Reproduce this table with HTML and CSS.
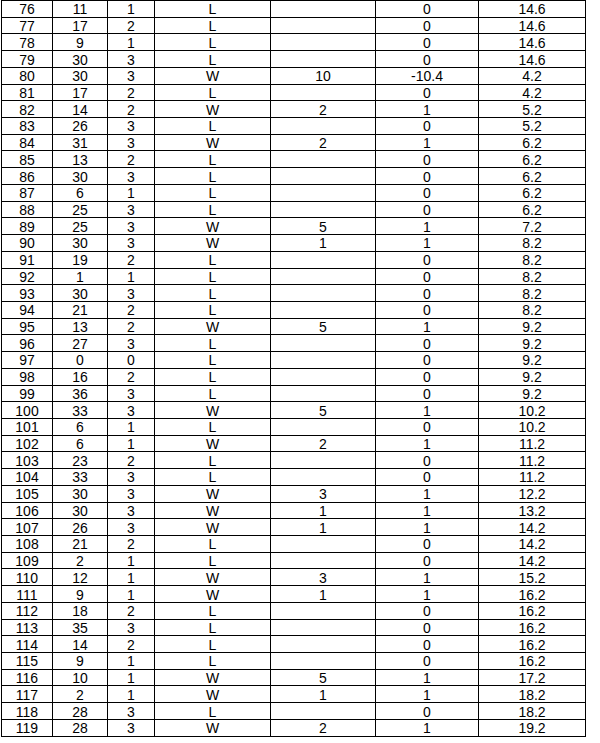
FILE: index.html
```html
<!DOCTYPE html>
<html>
<head>
<meta charset="utf-8">
<link rel="stylesheet" href="styles.css">
</head>
<body>
<table class="grid">
<colgroup>
<col class="c1"><col class="c2"><col class="c3"><col class="c4"><col class="c5"><col class="c6"><col class="c7">
</colgroup>
<tbody>
<tr><td>76</td><td>11</td><td>1</td><td>L</td><td></td><td>0</td><td>14.6</td></tr>
<tr><td>77</td><td>17</td><td>2</td><td>L</td><td></td><td>0</td><td>14.6</td></tr>
<tr><td>78</td><td>9</td><td>1</td><td>L</td><td></td><td>0</td><td>14.6</td></tr>
<tr><td>79</td><td>30</td><td>3</td><td>L</td><td></td><td>0</td><td>14.6</td></tr>
<tr><td>80</td><td>30</td><td>3</td><td>W</td><td>10</td><td>-10.4</td><td>4.2</td></tr>
<tr><td>81</td><td>17</td><td>2</td><td>L</td><td></td><td>0</td><td>4.2</td></tr>
<tr><td>82</td><td>14</td><td>2</td><td>W</td><td>2</td><td>1</td><td>5.2</td></tr>
<tr><td>83</td><td>26</td><td>3</td><td>L</td><td></td><td>0</td><td>5.2</td></tr>
<tr><td>84</td><td>31</td><td>3</td><td>W</td><td>2</td><td>1</td><td>6.2</td></tr>
<tr><td>85</td><td>13</td><td>2</td><td>L</td><td></td><td>0</td><td>6.2</td></tr>
<tr><td>86</td><td>30</td><td>3</td><td>L</td><td></td><td>0</td><td>6.2</td></tr>
<tr><td>87</td><td>6</td><td>1</td><td>L</td><td></td><td>0</td><td>6.2</td></tr>
<tr><td>88</td><td>25</td><td>3</td><td>L</td><td></td><td>0</td><td>6.2</td></tr>
<tr><td>89</td><td>25</td><td>3</td><td>W</td><td>5</td><td>1</td><td>7.2</td></tr>
<tr><td>90</td><td>30</td><td>3</td><td>W</td><td>1</td><td>1</td><td>8.2</td></tr>
<tr><td>91</td><td>19</td><td>2</td><td>L</td><td></td><td>0</td><td>8.2</td></tr>
<tr><td>92</td><td>1</td><td>1</td><td>L</td><td></td><td>0</td><td>8.2</td></tr>
<tr><td>93</td><td>30</td><td>3</td><td>L</td><td></td><td>0</td><td>8.2</td></tr>
<tr><td>94</td><td>21</td><td>2</td><td>L</td><td></td><td>0</td><td>8.2</td></tr>
<tr><td>95</td><td>13</td><td>2</td><td>W</td><td>5</td><td>1</td><td>9.2</td></tr>
<tr><td>96</td><td>27</td><td>3</td><td>L</td><td></td><td>0</td><td>9.2</td></tr>
<tr><td>97</td><td>0</td><td>0</td><td>L</td><td></td><td>0</td><td>9.2</td></tr>
<tr><td>98</td><td>16</td><td>2</td><td>L</td><td></td><td>0</td><td>9.2</td></tr>
<tr><td>99</td><td>36</td><td>3</td><td>L</td><td></td><td>0</td><td>9.2</td></tr>
<tr><td>100</td><td>33</td><td>3</td><td>W</td><td>5</td><td>1</td><td>10.2</td></tr>
<tr><td>101</td><td>6</td><td>1</td><td>L</td><td></td><td>0</td><td>10.2</td></tr>
<tr><td>102</td><td>6</td><td>1</td><td>W</td><td>2</td><td>1</td><td>11.2</td></tr>
<tr><td>103</td><td>23</td><td>2</td><td>L</td><td></td><td>0</td><td>11.2</td></tr>
<tr><td>104</td><td>33</td><td>3</td><td>L</td><td></td><td>0</td><td>11.2</td></tr>
<tr><td>105</td><td>30</td><td>3</td><td>W</td><td>3</td><td>1</td><td>12.2</td></tr>
<tr><td>106</td><td>30</td><td>3</td><td>W</td><td>1</td><td>1</td><td>13.2</td></tr>
<tr><td>107</td><td>26</td><td>3</td><td>W</td><td>1</td><td>1</td><td>14.2</td></tr>
<tr><td>108</td><td>21</td><td>2</td><td>L</td><td></td><td>0</td><td>14.2</td></tr>
<tr><td>109</td><td>2</td><td>1</td><td>L</td><td></td><td>0</td><td>14.2</td></tr>
<tr><td>110</td><td>12</td><td>1</td><td>W</td><td>3</td><td>1</td><td>15.2</td></tr>
<tr><td>111</td><td>9</td><td>1</td><td>W</td><td>1</td><td>1</td><td>16.2</td></tr>
<tr><td>112</td><td>18</td><td>2</td><td>L</td><td></td><td>0</td><td>16.2</td></tr>
<tr><td>113</td><td>35</td><td>3</td><td>L</td><td></td><td>0</td><td>16.2</td></tr>
<tr><td>114</td><td>14</td><td>2</td><td>L</td><td></td><td>0</td><td>16.2</td></tr>
<tr><td>115</td><td>9</td><td>1</td><td>L</td><td></td><td>0</td><td>16.2</td></tr>
<tr><td>116</td><td>10</td><td>1</td><td>W</td><td>5</td><td>1</td><td>17.2</td></tr>
<tr><td>117</td><td>2</td><td>1</td><td>W</td><td>1</td><td>1</td><td>18.2</td></tr>
<tr><td>118</td><td>28</td><td>3</td><td>L</td><td></td><td>0</td><td>18.2</td></tr>
<tr><td>119</td><td>28</td><td>3</td><td>W</td><td>2</td><td>1</td><td>19.2</td></tr>
</tbody>
</table>
</body>
</html>
```
FILE: styles.css
```css
html, body {
  margin: 0;
  padding: 0;
  background: #fff;
}
.grid {
  margin: 0 0 0 1px;
  border-collapse: collapse;
  table-layout: fixed;
  width: 584px;
  font-family: "Liberation Sans", Arial, sans-serif;
  font-size: 14px;
  color: #000;
}
.c1 { width: 51px; }
.c2 { width: 55px; }
.c3 { width: 47px; }
.c4 { width: 116px; }
.c5 { width: 105px; }
.c6 { width: 103px; }
.c7 { width: 107px; }
.grid tr {
  height: 16.72px;
}
.grid td {
  border: 1px solid #000;
  padding: 1px 0 0;
  line-height: 14px;
  text-align: center;
  vertical-align: middle;
  white-space: nowrap;
}
```
